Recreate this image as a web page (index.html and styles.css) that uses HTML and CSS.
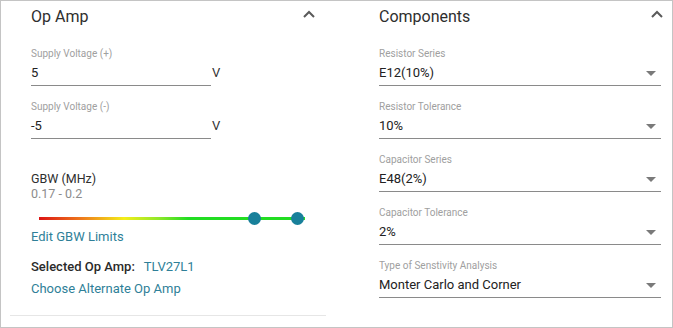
FILE: index.html
```html
<!DOCTYPE html>
<html lang="en">
<head>
    <meta charset="UTF-8">
    <title>Op Amp Designer</title>
    <link rel="stylesheet" href="styles.css">
</head>
<body>
    <div class="frame">
        <section class="panel panel-left">
            <div class="panel-head">
                <h2>Op Amp</h2>
                <svg class="chevron" width="12" height="8" viewBox="0 0 12 8"><polyline points="1,7 6,2 11,7" fill="none" stroke="#5a5a5a" stroke-width="2"/></svg>
            </div>
            <div class="fields">
                <div class="field field-unit">
                    <div class="field-box">
                        <label>Supply Voltage (+)</label>
                        <div class="value">5</div>
                    </div>
                    <span class="unit">V</span>
                </div>
                <div class="field field-unit">
                    <div class="field-box">
                        <label>Supply Voltage (-)</label>
                        <div class="value">-5</div>
                    </div>
                    <span class="unit">V</span>
                </div>
            </div>

            <div class="gbw">
                <div class="gbw-title">GBW (MHz)</div>
                <div class="gbw-range">0.17 - 0.2</div>
            </div>
            <div class="slider">
                <div class="track"></div>
                <span class="thumb" style="left: 81.2%"></span>
                <span class="thumb" style="left: 97%"></span>
            </div>
            <a href="#" class="link edit-link">Edit GBW Limits</a>
            <div class="selected">
                <span class="selected-label">Selected Op Amp:</span>
                <a href="#" class="link">TLV27L1</a>
            </div>
            <a href="#" class="link alt-link">Choose Alternate Op Amp</a>
        </section>

        <section class="panel panel-right">
            <div class="panel-head">
                <h2>Components</h2>
                <svg class="chevron" width="12" height="8" viewBox="0 0 12 8"><polyline points="1,7 6,2 11,7" fill="none" stroke="#5a5a5a" stroke-width="2"/></svg>
            </div>
            <div class="fields">
                <div class="field select">
                    <label>Resistor Series</label>
                    <div class="value"><span>E12(10%)</span><i class="caret"></i></div>
                </div>
                <div class="field select">
                    <label>Resistor Tolerance</label>
                    <div class="value"><span>10%</span><i class="caret"></i></div>
                </div>
                <div class="field select">
                    <label>Capacitor Series</label>
                    <div class="value"><span>E48(2%)</span><i class="caret"></i></div>
                </div>
                <div class="field select">
                    <label>Capacitor Tolerance</label>
                    <div class="value"><span>2%</span><i class="caret"></i></div>
                </div>
                <div class="field select">
                    <label>Type of Senstivity Analysis</label>
                    <div class="value"><span>Monter Carlo and Corner</span><i class="caret"></i></div>
                </div>
            </div>
        </section>
    </div>
</body>
</html>
```

FILE: styles.css
```css
body {
    margin: 0;
    padding: 0;
    font-family: Roboto, "Liberation Sans", Arial, sans-serif;
    background: #ffffff;
    color: #333333;
}
.frame {
    width: 673px;
    height: 328px;
    box-sizing: border-box;
    border: 1px solid #c4c4c4;
    display: flex;
    align-items: flex-start;
    padding-left: 9px;
}
.panel {
    box-sizing: border-box;
    padding-left: 21px;
}
.panel-left {
    width: 316px;
    padding-bottom: 18px;
    border-bottom: 1px solid #e6e6e6;
}
.panel-right {
    flex: 1;
    margin-left: 32px;
}
.panel-head {
    height: 32px;
    display: flex;
    align-items: center;
    justify-content: space-between;
}
.panel-left .panel-head {
    padding-right: 11px;
}
.panel-right .panel-head {
    padding-right: 9px;
}
.panel-head h2 {
    margin: 0;
    font-size: 16px;
    font-weight: 400;
    line-height: 20px;
    color: #2e2e2e;
}
.chevron {
    display: block;
    margin-top: -6px;
}
.fields {
    padding-top: 15px;
}
.field {
    margin-bottom: 15px;
}
.field:last-child {
    margin-bottom: 0;
}
.field label {
    display: block;
    font-size: 10px;
    line-height: 12px;
    color: #a0a0a0;
    margin-bottom: 5px;
}
.value {
    font-size: 13px;
    line-height: 16px;
    color: #222222;
}
.field-unit {
    display: flex;
    align-items: flex-end;
}
.field-box {
    width: 180px;
    padding-bottom: 4px;
    border-bottom: 1px solid #8a8a8a;
}
.unit {
    font-size: 13px;
    line-height: 16px;
    color: #333333;
    margin-left: 1px;
    margin-bottom: 5px;
}
.select {
    margin-right: 11px;
    padding-bottom: 4px;
    border-bottom: 1px solid #8a8a8a;
}
.select .value {
    display: flex;
    justify-content: space-between;
    align-items: center;
    padding-right: 5px;
}
.caret {
    width: 0;
    height: 0;
    border-left: 5px solid transparent;
    border-right: 5px solid transparent;
    border-top: 5px solid #7a7a7a;
}
.gbw {
    margin-top: 32px;
    font-size: 12.5px;
    line-height: 15px;
}
.gbw-title {
    color: #2e2e2e;
}
.gbw-range {
    color: #8c8c8c;
}
.slider {
    position: relative;
    margin: 11px 0 0 8px;
    width: 266px;
    height: 13px;
    display: flex;
    align-items: center;
}
.track {
    width: 100%;
    height: 3px;
    background: linear-gradient(90deg, #dc1414 0%, #ee7a1c 16%, #f4ee1a 32%, #8fe82a 45%, #22dd22 56%, #22dd22 100%);
}
.thumb {
    position: absolute;
    top: 0;
    width: 13px;
    height: 13px;
    margin-left: -6.5px;
    border-radius: 50%;
    background: #18809a;
}
.link {
    color: #2f7f98;
    text-decoration: none;
    font-size: 13px;
    line-height: 16px;
}
.edit-link {
    display: block;
    margin-top: 4px;
}
.selected {
    margin-top: 14px;
    font-size: 13px;
    line-height: 16px;
}
.selected-label {
    font-weight: 500;
    color: #2a2a2a;
    margin-right: 6px;
}
.alt-link {
    display: block;
    margin-top: 6px;
}
```
